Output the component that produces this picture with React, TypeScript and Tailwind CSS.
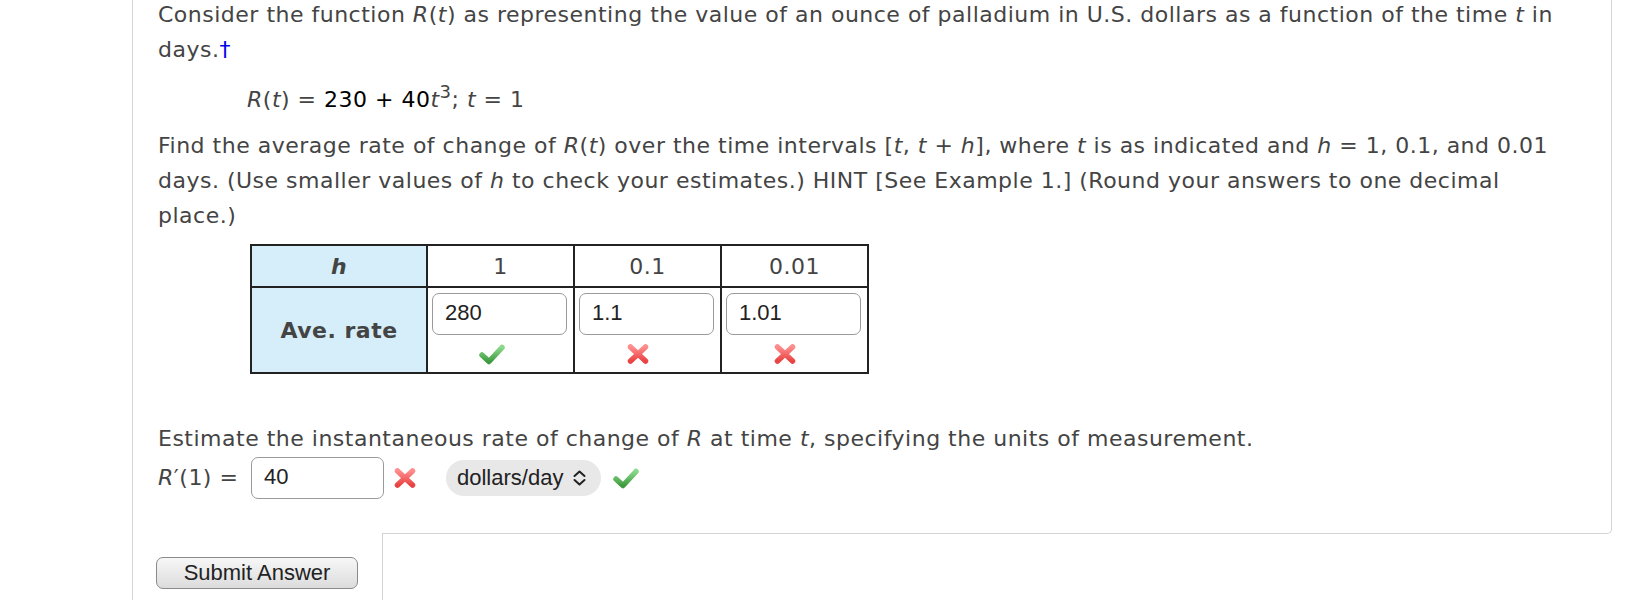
import React from 'react';

// Correct / incorrect markers used beside graded answers
function CheckMark({ className = '' }: { className?: string }) {
  return (
    <svg width="28" height="22" viewBox="0 0 28 22" className={className}>
      <defs>
        <linearGradient id="ck" x1="0" y1="0" x2="0" y2="1">
          <stop offset="0" stopColor="#8ad88a" />
          <stop offset="1" stopColor="#3f9b3f" />
        </linearGradient>
      </defs>
      <path d="M4 12 L11 18.5 L24 4.5" fill="none" stroke="url(#ck)" strokeWidth="5.5" strokeLinecap="round" strokeLinejoin="round" />
    </svg>
  );
}

function CrossMark({ className = '' }: { className?: string }) {
  return (
    <svg width="24" height="22" viewBox="0 0 24 22" className={className}>
      <defs>
        <linearGradient id="cx" x1="0" y1="0" x2="0" y2="1">
          <stop offset="0" stopColor="#ff8d8d" />
          <stop offset="1" stopColor="#ea4343" />
        </linearGradient>
      </defs>
      <path d="M4.5 4 L19.5 18 M19.5 4 L4.5 18" fill="none" stroke="url(#cx)" strokeWidth="5.5" strokeLinecap="round" />
    </svg>
  );
}

// select arrow of the units pill
function UpDown() {
  return (
    <svg width="15" height="18" viewBox="0 0 15 18">
      <path d="M2.5 7 L7.5 2.5 L12.5 7 M2.5 11 L7.5 15.5 L12.5 11" fill="none" stroke="#222" strokeWidth="2" strokeLinecap="round" strokeLinejoin="round" />
    </svg>
  );
}

function AnswerBox({ value, w = 'w-[135px]' }: { value: string; w?: string }) {
  return (
    <div
      className={`${w} h-[42px] rounded-[7px] border border-[#9a9a9a] bg-white pl-[12px] pt-[6px] text-[22px] leading-[25px] tracking-normal text-[#222] font-['Liberation_Sans',Arial,sans-serif]`}
    >
      {value}
    </div>
  );
}

const cols = [
  { h: '1', value: '280', ok: true },
  { h: '0.1', value: '1.1', ok: false },
  { h: '0.01', value: '1.01', ok: false },
];

export default function App() {
  return (
    <div className="h-[600px] overflow-hidden bg-white text-[22px] tracking-[0.5px] text-[#444] font-['DejaVu_Sans',Verdana,sans-serif]">
      <div className="ml-[132px] flex h-full w-[1480px] flex-col border-l border-[#d4d4d4]">
        {/* question body */}
        <div className="h-[499px] border-r border-[#d4d4d4] pl-[25px] pr-[35px]">
          <p className="-mt-[3px] leading-[35px]">
            Consider the function <i>R</i>(<i>t</i>) as representing the value of an ounce of palladium in U.S. dollars as a
            function of the time <i>t</i> in days.<span className="text-[#0000ee]">†</span>
          </p>

          <p className="mt-[15px] pl-[89px] leading-[35px]">
            <i>R</i>(<i>t</i>) = <span className="text-black">230 + 40</span>
            <i>t</i>
            <sup className="text-[18px]">3</sup>; <i>t</i> = 1
          </p>

          <p className="mt-[11px] leading-[35px]">
            Find the average rate of change of <i>R</i>(<i>t</i>) over the time intervals [<i>t</i>, <i>t</i> + <i>h</i>], where{' '}
            <i>t</i> is as indicated and <i>h</i> = 1, 0.1, and 0.01 days. (Use smaller values of <i>h</i> to check your
            estimates.) HINT [See Example 1.] (Round your answers to one decimal place.)
          </p>

          <table className="ml-[92px] mt-[11px] border-collapse">
            <tbody>
              <tr className="h-[42px]">
                <th className="w-[176px] border-2 border-[#222] bg-[#d5eef9] text-center font-bold italic">h</th>
                {cols.map((c) => (
                  <td key={c.h} className="w-[147px] border-2 border-[#222] text-center font-normal">
                    {c.h}
                  </td>
                ))}
              </tr>
              <tr className="h-[86px]">
                <th className="border-2 border-[#222] bg-[#d5eef9] text-center font-bold">Ave. rate</th>
                {cols.map((c) => (
                  <td key={c.h} className="border-2 border-[#222] align-top">
                    <div className="flex flex-col items-center pt-[5px] pl-[2px] pr-[4px]">
                      <AnswerBox value={c.value} />
                      <div className="mt-[8px] flex h-[22px] items-center">
                        {c.ok ? <CheckMark className="-ml-[16px]" /> : <CrossMark className="-ml-[18px]" />}
                      </div>
                    </div>
                  </td>
                ))}
              </tr>
            </tbody>
          </table>

          <p className="mt-[47px] leading-[35px]">
            Estimate the instantaneous rate of change of <i>R</i> at time <i>t</i>, specifying the units of measurement.
          </p>

          <div className="flex h-[43px] items-center">
            <span className="w-[93px] whitespace-nowrap">
              <i>R</i>′(1) =
            </span>
            <AnswerBox value="40" w="w-[133px]" />
            <CrossMark className="ml-[9px]" />
            <div className="ml-[29px] flex h-[36px] w-[155px] items-center gap-[9px] rounded-full bg-[#e8e8e8] pl-[11px] text-[22px] tracking-normal text-[#222] font-['Liberation_Sans',Arial,sans-serif]">
              dollars/day
              <UpDown />
            </div>
            <CheckMark className="ml-[11px]" />
          </div>
        </div>

        {/* closing edge of the question panel */}
        <div className="flex">
          <div className="w-[249px]" />
          <div className="h-[35px] flex-1 rounded-br-[5px] border-r border-b border-[#d4d4d4]" />
        </div>

        <div className="flex flex-1">
          <div className="w-[249px] pl-[23px] pt-[22px]">
            <button className="h-[32px] w-[202px] rounded-[7px] border border-[#8a8a8a] bg-gradient-to-b from-[#f7f7f7] to-[#dcdcdc] text-[22px] leading-[22px] tracking-normal text-[#222] font-['Liberation_Sans',Arial,sans-serif]">
              Submit Answer
            </button>
          </div>
          <div className="flex-1 border-l border-[#d4d4d4]" />
        </div>
      </div>
    </div>
  );
}
